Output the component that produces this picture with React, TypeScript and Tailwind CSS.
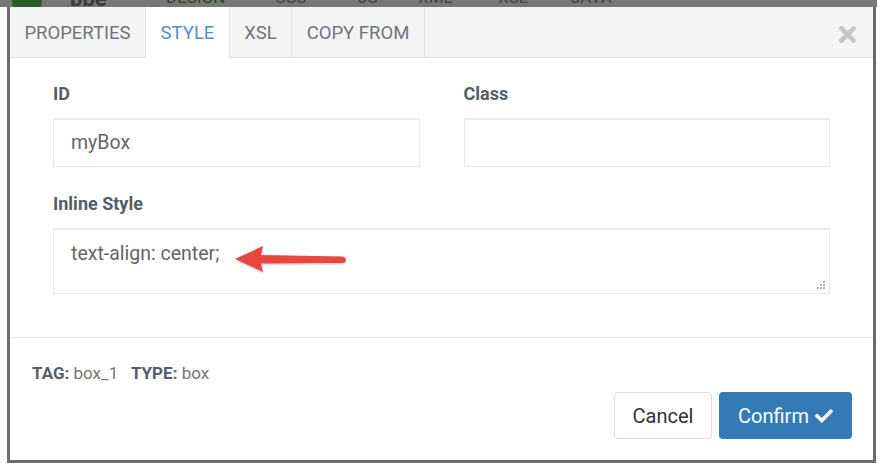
import React from "react";
import { FaTimes, FaCheck } from "react-icons/fa";

function Arrow() {
  return (
    <svg width="120" height="34" viewBox="0 0 120 34" className="absolute left-[178px] top-[13px]">
      <defs>
        <filter id="sh" x="-10%" y="-30%" width="120%" height="160%">
          <feDropShadow dx="0" dy="1" stdDeviation="1" floodColor="#000" floodOpacity="0.25" />
        </filter>
      </defs>
      <g filter="url(#sh)">
        <path d="M3 16 L31 3 L29 12 L110 13.5 Q114 14 114 17 Q114 20 110 20 L29 20.5 L31 29 Z" fill="#e8473f" />
      </g>
    </svg>
  );
}

function Grip() {
  return (
    <svg width="10" height="10" viewBox="0 0 10 10" className="absolute right-[3px] bottom-[3px]">
      {[
        [8, 2],
        [5, 5],
        [8, 5],
        [2, 8],
        [5, 8],
        [8, 8],
      ].map(([x, y], i) => (
        <rect key={i} x={x - 1} y={y - 1} width="2" height="2" fill="#b5b5b5" />
      ))}
    </svg>
  );
}

export default function App() {
  const tabs = [
    { label: "PROPERTIES", w: "w-[136px]", active: false },
    { label: "STYLE", w: "w-[84px]", active: true },
    { label: "XSL", w: "w-[62px]", active: false },
    { label: "COPY FROM", w: "w-[133px]", active: false },
  ];
  return (
    <div className="w-[881px] h-[467px] bg-white overflow-hidden font-['Roboto',sans-serif]">
      <div className="h-[7px] w-[877px] bg-[#777777] overflow-hidden relative">
        <div className="absolute left-[12px] top-[-14px] w-[30px] h-[30px] rounded-full bg-[#2f5b2a]" />
        <div className="absolute left-[70px] top-[-12px] text-[22px] font-bold leading-none text-[#3a3a3a]">bbe</div>
        <div className="absolute left-[166px] top-[-11px] text-[17px] leading-none text-[#2f4a1e]">DESIGN</div>
        <div className="absolute left-[275px] top-[-11px] text-[17px] leading-none text-[#444]">CSS</div>
        <div className="absolute left-[358px] top-[-11px] text-[17px] leading-none text-[#444]">JS</div>
        <div className="absolute left-[418px] top-[-11px] text-[17px] leading-none text-[#444]">XML</div>
        <div className="absolute left-[498px] top-[-11px] text-[17px] leading-none text-[#444]">XSL</div>
        <div className="absolute left-[571px] top-[-11px] text-[17px] leading-none text-[#444]">JAVA</div>
      </div>
      <div className="ml-[7px] w-[869px] h-[456px] border-x-[3px] border-b-[3px] border-[#6b6b6b] bg-white flex flex-col">
        <div className="h-[51px] bg-[#f4f4f4] border-b border-[#e2e2e2] flex items-stretch">
          {tabs.map((t) => (
            <div
              key={t.label}
              className={
                t.active
                  ? `${t.w} flex items-center justify-center pt-[3px] text-[18.5px] text-[#4f90cc] bg-white border-r border-[#e2e2e2] -mb-px`
                  : `${t.w} flex items-center justify-center pt-[3px] text-[18.5px] text-[#6c7480] border-r border-[#e2e2e2]`
              }
            >
              {t.label}
            </div>
          ))}
          <div className="flex-1" />
          <div className="flex items-center pr-[13px] pt-[4px]">
            <FaTimes className="text-[#c6c6c6]" size={25} />
          </div>
        </div>

        <div className="px-[43px] pt-[24px] pb-[43px] border-b border-[#e5e5e5]">
          <div className="grid grid-cols-2 gap-x-[44px]">
            <div>
              <div className="text-[18px] font-bold leading-[24px] text-[#555d68]">ID</div>
              <div className="mt-[12px] h-[49px] border border-[#e8e8e8] border-t-2 border-t-[#ececec] flex items-center pl-[17px] text-[19.5px] text-[#666]">
                myBox
              </div>
            </div>
            <div>
              <div className="text-[18px] font-bold leading-[24px] text-[#555d68]">Class</div>
              <div className="mt-[12px] h-[49px] border border-[#e8e8e8] border-t-2 border-t-[#ececec]" />
            </div>
          </div>
          <div className="mt-[25px] text-[18px] font-bold leading-[24px] text-[#555d68]">Inline Style</div>
          <div className="mt-[12px] h-[66px] border border-[#e8e8e8] border-t-2 border-t-[#ececec] relative pl-[17px] pt-[11px] text-[19.5px] leading-[26px] text-[#666]">
            text-align: center;
            <Arrow />
            <Grip />
          </div>
        </div>

        <div className="pl-[22px] pr-[21px] pt-[23px]">
          <div className="text-[17px] leading-[24px] text-[#777]">
            <span className="font-bold text-[#555d68]">TAG:</span> box_1{"\u00a0\u00a0\u00a0"}
            <span className="font-bold text-[#555d68]">TYPE:</span> box
          </div>
          <div className="mt-[7px] flex justify-end gap-[7px]">
            <button className="w-[98px] h-[47px] border border-[#dddddd] rounded-[4px] bg-white text-[20px] text-[#333]">
              Cancel
            </button>
            <button className="w-[133px] h-[47px] rounded-[4px] bg-[#337ab7] text-[20px] text-white flex items-center justify-center gap-[6px]">
              Confirm
              <FaCheck size={18} />
            </button>
          </div>
        </div>
      </div>
    </div>
  );
}
